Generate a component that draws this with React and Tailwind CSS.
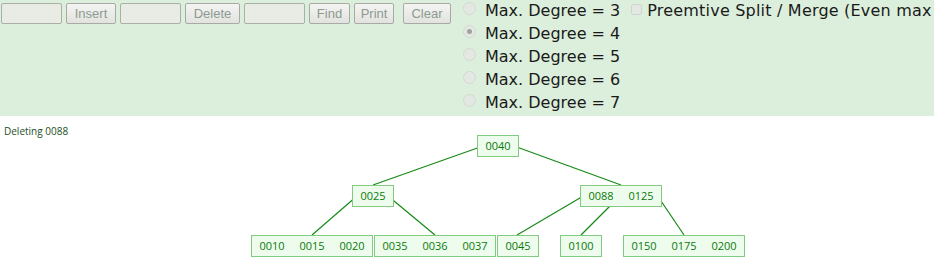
import React from "react";

const degrees = [3, 4, 5, 6, 7];

// tree nodes, positions relative to the canvas
const nodes = [
  { x: 477, y: 19, keys: ["0040"] },
  { x: 352, y: 69, keys: ["0025"] },
  { x: 580, y: 69, keys: ["0088", "0125"] },
  { x: 251, y: 119, keys: ["0010", "0015", "0020"] },
  { x: 374, y: 119, keys: ["0035", "0036", "0037"] },
  { x: 497, y: 119, keys: ["0045"] },
  { x: 560, y: 119, keys: ["0100"] },
  { x: 623, y: 119, keys: ["0150", "0175", "0200"] },
];

const edges = [
  [483, 30, 373, 69],
  [514, 30, 621, 69],
  [357, 80, 312, 119],
  [388, 80, 435, 119],
  [585, 79, 517, 119],
  [621, 79, 581, 119],
  [657, 79, 684, 119],
];

const TextBox = () => (
  <input
    type="text"
    className="w-[61px] h-[21px] p-0 bg-[#e9ebe5] border border-[#a9b0a6] rounded-[2px] outline-none"
  />
);

const Btn = ({ label, w }) => (
  <button
    className={`${w} h-[21px] p-0 rounded-[2px] border border-[#a7aaa5] bg-gradient-to-b from-[#f4f4f2] to-[#e2e3df] text-[13px] leading-none text-[#8c9a92] font-['Liberation_Sans',Arial,sans-serif]`}
  >
    {label}
  </button>
);

export default function App() {
  return (
    <div className="w-[934px] h-[278px] overflow-hidden bg-white">
      {/* Controls */}
      <div className="h-[116px] bg-[#dcefdc] flex items-start whitespace-nowrap overflow-hidden">
        <div className="flex items-center pl-px pt-[3px]">
          <TextBox />
          <div className="ml-[4px] flex">
            <Btn label="Insert" w="w-[50px]" />
          </div>
          <div className="ml-[4px] flex">
            <TextBox />
          </div>
          <div className="ml-[4px] flex">
            <Btn label="Delete" w="w-[55px]" />
          </div>
          <div className="ml-[4px] flex">
            <TextBox />
          </div>
          <div className="ml-[4px] flex">
            <Btn label="Find" w="w-[41px]" />
          </div>
          <div className="ml-[4px] flex">
            <Btn label="Print" w="w-[40px]" />
          </div>
          <div className="ml-[9px] flex">
            <Btn label="Clear" w="w-[48px]" />
          </div>
        </div>

        <div className="ml-[12px] -mt-px flex flex-col font-['DejaVu_Sans',Verdana,sans-serif] text-[16px] text-[#1a1a1a]">
          {degrees.map((d) => (
            <div key={d} className="h-[23px] leading-[23px] flex items-start">
              <span className="mt-[3px] w-[13px] h-[13px] rounded-full border border-[#d3d8d1] bg-[#e4e8e2] flex items-center justify-center">
                {d === 4 && (
                  <span className="w-[5px] h-[5px] rounded-full bg-[#9ea39c]" />
                )}
              </span>
              <span className="ml-[9px]">Max. Degree = {d}</span>
            </div>
          ))}
        </div>

        <div className="ml-[11px] -mt-px h-[23px] leading-[23px] flex items-start font-['DejaVu_Sans',Verdana,sans-serif] text-[16px] text-[#1a1a1a]">
          <span className="mt-[5px] w-[11px] h-[11px] rounded-[2px] border border-[#d0d4ce] bg-[#e4e8e2]" />
          <span className="ml-[5px] tracking-[0.2px]">Preemtive Split / Merge (Even max degree only)</span>
        </div>
      </div>

      {/* Canvas */}
      <div className="relative h-[162px] font-['Open_Sans','Noto_Sans',sans-serif]">
        <div className="absolute left-[4px] top-[8px] text-[10px] text-[#224f22]">
          Deleting 0088
        </div>

        <svg className="absolute inset-0" width="934" height="162">
          {edges.map(([x1, y1, x2, y2], i) => (
            <line
              key={i}
              x1={x1}
              y1={y1}
              x2={x2}
              y2={y2}
              stroke="#158a15"
              strokeWidth="1.2"
            />
          ))}
        </svg>

        {nodes.map((n, i) => (
          <div
            key={i}
            className="absolute h-[22px] flex border border-[#82c982] bg-[#eefcee] text-[11px] text-[#0b7a0b]"
            style={{ left: n.x, top: n.y }}
          >
            {n.keys.map((k) => (
              <span key={k} className="w-[40px] flex items-center justify-center">
                {k}
              </span>
            ))}
          </div>
        ))}
      </div>
    </div>
  );
}
